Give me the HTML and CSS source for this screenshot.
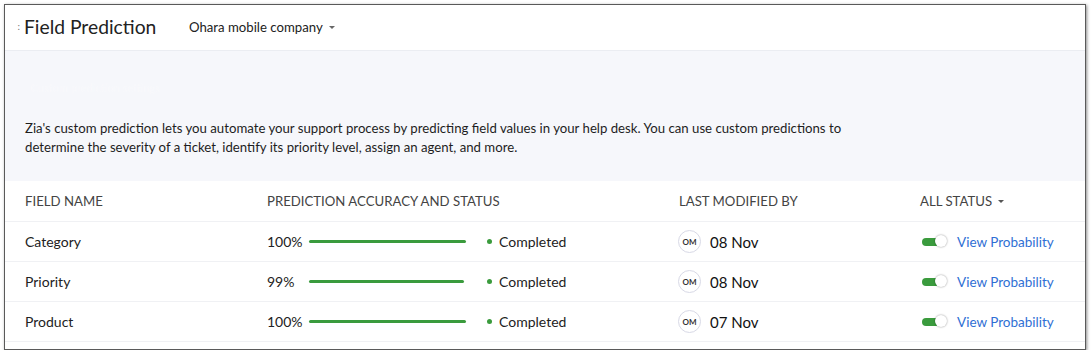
FILE: index.html
```html
<!DOCTYPE html>
<html lang="en">

<head>
  <meta charset="UTF-8">
  <meta name="viewport" content="width=device-width, initial-scale=1.0">
  <title>Field Prediction</title>
  <link rel="stylesheet" href="styles.css">
</head>

<body>
  <div class="frame">
    <div class="topbar">
      <span class="back-dot">:</span>
      <h1 class="title">Field Prediction</h1>
      <div class="portal">Ohara mobile company <span class="caret"></span></div>
    </div>

    <div class="intro">
      <div class="ghost">Custom prediction settings</div>
      <p>Zia's custom prediction lets you automate your support process by predicting field values in your help desk. You can use custom predictions to
        determine the severity of a ticket, identify its priority level, assign an agent, and more.</p>
    </div>

    <div class="grid head">
      <div>FIELD NAME</div>
      <div>PREDICTION ACCURACY AND STATUS</div>
      <div>LAST MODIFIED BY</div>
      <div class="filter">ALL STATUS <span class="caret dark"></span></div>
    </div>

    <div class="grid row">
      <div>Category</div>
      <div class="acc">
        <span class="pct">100%</span>
        <span class="bar"><span class="fill" style="width: 100%"></span></span>
        <span class="state"><i class="dot"></i>Completed</span>
      </div>
      <div class="mod"><span class="avatar">OM</span>08 Nov</div>
      <div class="act"><span class="toggle"><span class="knob"></span></span><a href="#">View Probability</a></div>
    </div>

    <div class="grid row">
      <div>Priority</div>
      <div class="acc">
        <span class="pct">99%</span>
        <span class="bar"><span class="fill" style="width: 99%"></span></span>
        <span class="state"><i class="dot"></i>Completed</span>
      </div>
      <div class="mod"><span class="avatar">OM</span>08 Nov</div>
      <div class="act"><span class="toggle"><span class="knob"></span></span><a href="#">View Probability</a></div>
    </div>

    <div class="grid row">
      <div>Product</div>
      <div class="acc">
        <span class="pct">100%</span>
        <span class="bar"><span class="fill" style="width: 100%"></span></span>
        <span class="state"><i class="dot"></i>Completed</span>
      </div>
      <div class="mod"><span class="avatar">OM</span>07 Nov</div>
      <div class="act"><span class="toggle"><span class="knob"></span></span><a href="#">View Probability</a></div>
    </div>
  </div>
</body>

</html>
```

FILE: styles.css
```css
html,
body {
  margin: 0;
  padding: 0;
  background: #fff;
}

body {
  font-family: Lato, "Open Sans", sans-serif;
  color: #222;
}

.frame {
  margin: 4px 0 0 4px;
  width: 1080px;
  height: 344px;
  border: 1px solid #5a5a5a;
  box-shadow: 1px 1px 3px rgba(0, 0, 0, 0.45);
  overflow: hidden;
  background: #fff;
}

/* header */
.topbar {
  height: 45px;
  display: flex;
  align-items: center;
  border-bottom: 1px solid #ebedf2;
}

.back-dot {
  width: 15px;
  text-align: right;
  font-size: 10px;
  color: #777;
  margin-right: 4px;
  padding-bottom: 3px;
}

.title {
  margin: 0;
  padding-bottom: 3px;
  font-size: 19.3px;
  font-weight: 400;
  color: #222;
  width: 165px;
}

.portal {
  font-size: 13.2px;
  color: #222;
  display: flex;
  align-items: center;
  padding-bottom: 1px;
}

.caret {
  display: inline-block;
  margin-left: 6px;
  border-left: 3px solid transparent;
  border-right: 3px solid transparent;
  border-top: 3px solid #666;
}

.caret.dark {
  border-top-color: #555;
}

/* description */
.intro {
  background: #f6f7fb;
  padding: 30px 20px 25px 20px;
}

.ghost {
  font-size: 11px;
  color: #f6f7fb;
  text-shadow: 0 0 1px #fff;
  height: 38px;
  padding-left: 6px;
}

.intro p {
  margin: 0;
  font-size: 13.2px;
  line-height: 18.5px;
  color: #1e1e1e;
  max-width: 860px;
}

/* table */
.grid {
  display: grid;
  grid-template-columns: 242px 412px 241px 1fr;
  align-items: center;
  padding-left: 20px;
  border-bottom: 1px solid #f0f1f4;
}

.head {
  height: 40px;
  font-size: 13.2px;
  color: #444;
}

.filter {
  display: flex;
  align-items: center;
}

.row {
  height: 39px;
  font-size: 14px;
  color: #222;
}

.acc {
  display: flex;
  align-items: center;
}

.pct {
  width: 42px;
}

.bar {
  display: block;
  width: 157px;
  height: 3px;
  margin-right: 21px;
}

.fill {
  display: block;
  height: 3px;
  background: #3a9b3d;
  border-radius: 2px;
}

.state {
  display: flex;
  align-items: center;
}

.dot {
  display: inline-block;
  width: 5px;
  height: 5px;
  border-radius: 50%;
  background: #3a9b3d;
  margin-right: 7px;
}

.mod {
  display: flex;
  align-items: center;
  font-size: 15px;
  color: #111;
}

.avatar {
  width: 21px;
  height: 21px;
  border: 1px solid #d8d9e6;
  border-radius: 50%;
  display: flex;
  align-items: center;
  justify-content: center;
  font-size: 8px;
  font-weight: 700;
  color: #333;
  margin-right: 9px;
  margin-left: -1px;
}

.act {
  display: flex;
  align-items: center;
}

.toggle {
  position: relative;
  width: 20px;
  height: 8px;
  border-radius: 4px;
  background: #3a9b3d;
  margin-left: 2px;
  margin-right: 15px;
}

.knob {
  position: absolute;
  left: 13px;
  top: -3px;
  width: 12px;
  height: 12px;
  border-radius: 50%;
  background: #fff;
  box-shadow: 0 0 2px rgba(0, 0, 0, 0.45);
}

.act a {
  color: #2f6fd4;
  text-decoration: none;
  font-size: 13.5px;
}
```
